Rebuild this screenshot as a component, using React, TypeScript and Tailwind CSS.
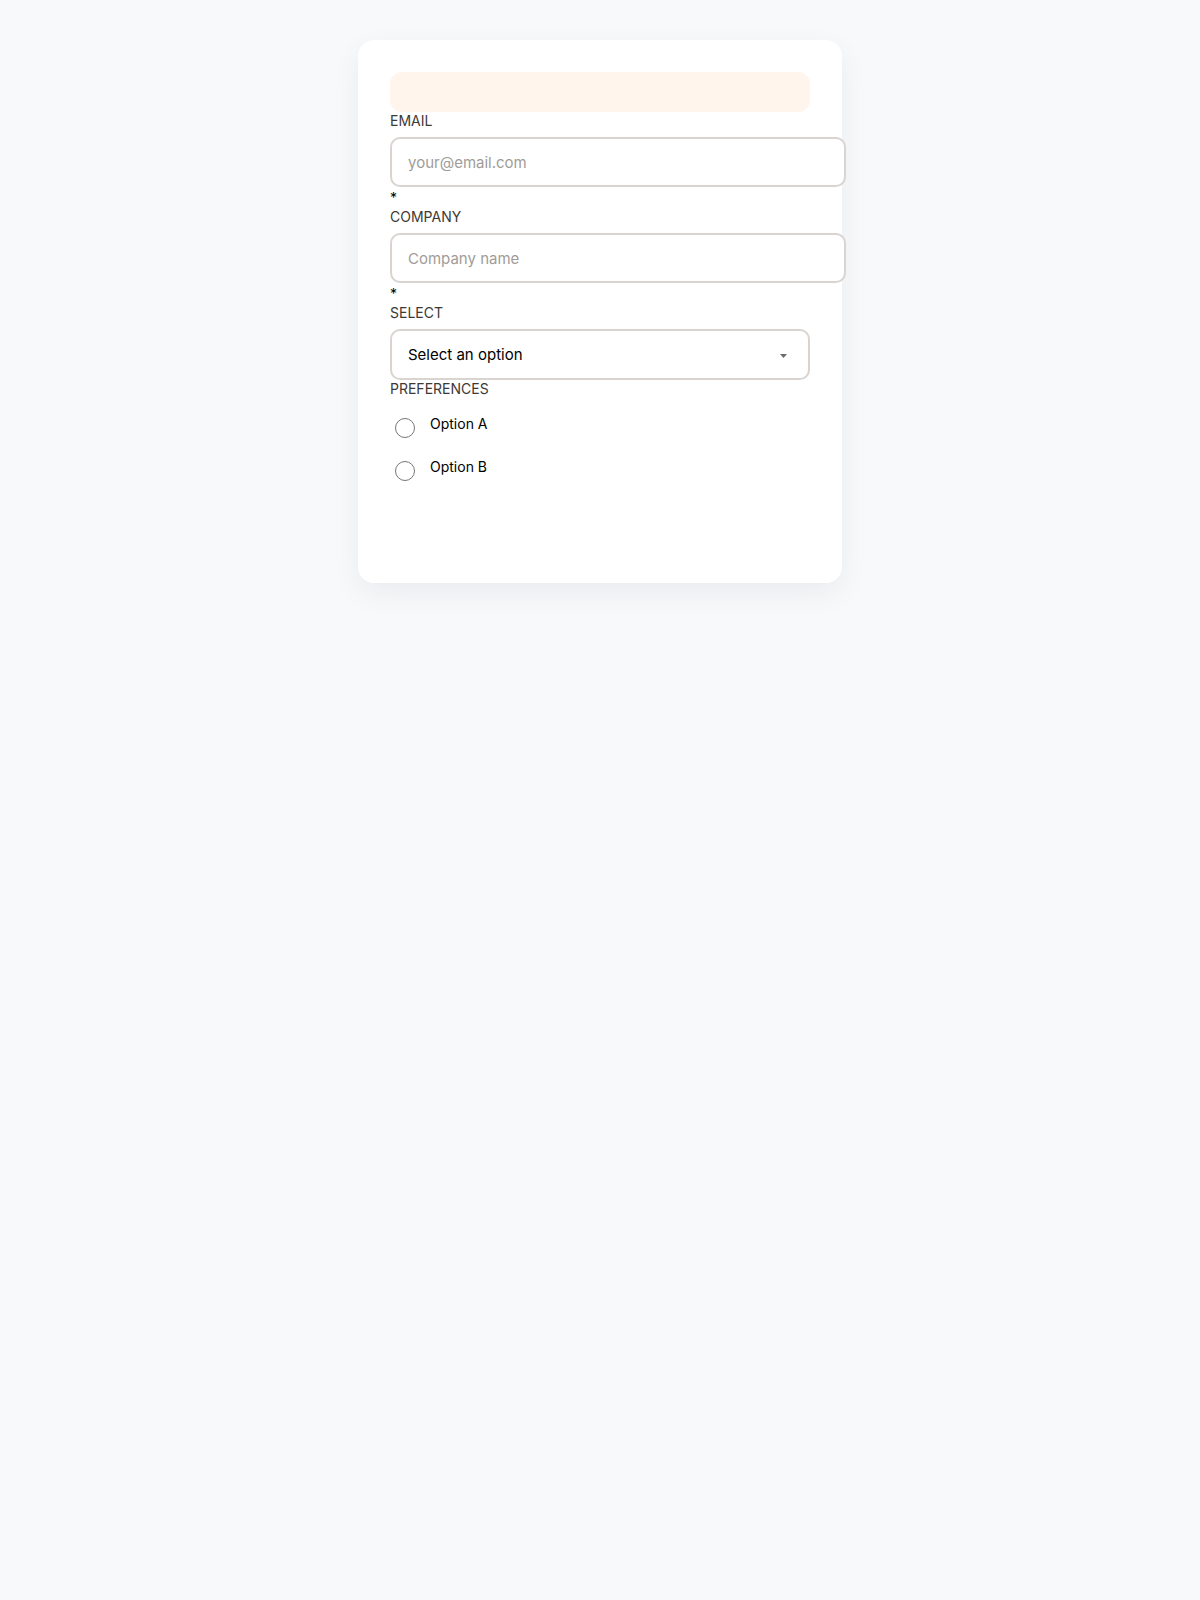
import React from "react";

const font = { fontFamily: "Inter, 'Noto Sans', sans-serif" };

function Label({ children }: { children: React.ReactNode }) {
  return (
    <label className="block text-sm leading-[17px] mb-2 uppercase text-[#3d3935]">
      {children}
    </label>
  );
}

function Required() {
  return <div className="text-sm leading-[21px] text-black">*</div>;
}

function TextInput({ placeholder }: { placeholder: string }) {
  return (
    <input
      type="text"
      placeholder={placeholder}
      className="box-content block w-full h-[22px] pt-[13px] pb-[11px] px-4 border-2 border-[#d9d4d0] rounded-[10px] text-[15px] leading-[22px] text-black placeholder:text-[#a19c98] bg-white outline-none"
    />
  );
}

function Radio({ label }: { label: string }) {
  return (
    <div className="flex items-start">
      <span className="mt-[5px] ml-[5px] w-5 h-5 rounded-full border border-[#767676] bg-white shrink-0" />
      <span className="ml-[15px] text-sm leading-[21px] text-black">{label}</span>
    </div>
  );
}

export default function App() {
  return (
    <div className="min-h-[1600px] bg-[#f8f9fb] pt-10" style={font}>
      <div className="mx-auto w-[484px] bg-white rounded-2xl p-8 shadow-[0_10px_30px_rgba(17,24,39,0.06)]">
        <div className="h-10 rounded-xl bg-[#fff5ec]" />
        <Label>Email</Label>
        <TextInput placeholder="your@email.com" />
        <Required />
        <Label>Company</Label>
        <TextInput placeholder="Company name" />
        <Required />
        <Label>Select</Label>
        <div className="flex items-center justify-between h-[51px] w-full border-2 border-[#d9d4d0] rounded-[10px] pl-4 pr-[21px] pt-[2px] bg-white">
          <span className="text-[15px] text-black">Select an option</span>
          <svg width="7" height="4" viewBox="0 0 7 4" className="block">
            <path d="M0 0 L7 0 L3.5 4 Z" fill="#6b6b6b" />
          </svg>
        </div>
        <Label>Preferences</Label>
        <div className="mt-[16px] flex flex-col gap-[18px]">
          <Radio label="Option A" />
          <Radio label="Option B" />
        </div>
        <div className="h-[70px]" />
      </div>
    </div>
  );
}
